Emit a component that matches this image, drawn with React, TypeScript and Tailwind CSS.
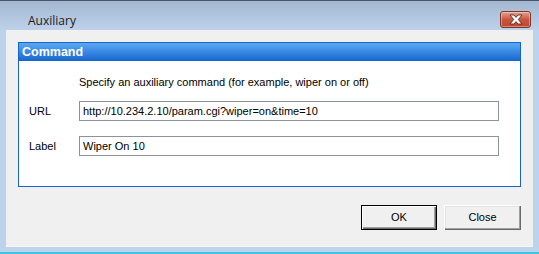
import React from "react";

function CloseGlyph() {
  return (
    <svg width="16" height="11" viewBox="0 0 16 11">
      <path
        d="M2 1 L6 1 L8 3.4 L10 1 L14 1 L10.3 5.5 L14 10 L10 10 L8 7.6 L6 10 L2 10 L5.7 5.5 Z"
        fill="#ffffff"
        stroke="#5a2a22"
        strokeWidth="0.9"
        strokeLinejoin="round"
      />
    </svg>
  );
}

export default function App() {
  const font = { fontFamily: '"Liberation Sans", Arial, sans-serif' };
  return (
    <div
      className="w-[539px] h-[254px] flex flex-col bg-[#bcd3eb] border-t border-[#4a5566] overflow-hidden"
      style={font}
    >
      {/* title bar */}
      <div className="h-[29px] flex justify-between bg-gradient-to-b from-[#a4b7d0] to-[#bdd2ea]">
        <div className="pl-[28px] pt-[11px] text-[12px] text-[#1a1a1a]" style={{ fontFamily: '"Open Sans", "Liberation Sans", sans-serif' }}>
          Auxiliary
        </div>
        <div className="mt-[10px] mr-[8px] w-[31px] h-[17px] rounded-[3px] border border-[#7f3629] bg-gradient-to-b from-[#e3a090] via-[#c9553f] to-[#c04630] flex items-center justify-center shadow-[inset_0_0_0_1px_rgba(255,255,255,0.35)]">
          <CloseGlyph />
        </div>
      </div>
      {/* client area */}
      <div className="mx-[6px] h-[217px] bg-[#f0f0f0] flex flex-col pl-[12px] pt-[12px] border-b border-[#f7f7f7]">
        <div className="w-[503px] h-[145px] border border-[#1664c8] bg-white flex flex-col">
          <div className="h-[18px] bg-gradient-to-b from-[#5aa8f3] to-[#1466cf] flex items-center pl-[3px] text-[12.5px] font-bold text-white">
            Command
          </div>
          <div className="flex flex-col pt-[15px] text-[11px] text-black">
            <div className="pl-[60px] leading-[13px]">
              Specify an auxiliary command (for example, wiper on or off)
            </div>
            <div className="flex items-center mt-[12px] h-[20px]">
              <div className="w-[60px] pl-[10px]">URL</div>
              <div className="w-[420px] h-[20px] border border-[#8e91a3] flex items-center pl-[3px]">
                http://10.234.2.10/param.cgi?wiper=on&amp;time=10
              </div>
            </div>
            <div className="flex items-center mt-[15px] h-[20px]">
              <div className="w-[60px] pl-[10px]">Label</div>
              <div className="w-[420px] h-[20px] border border-[#8e91a3] flex items-center pl-[3px]">
                Wiper On 10
              </div>
            </div>
          </div>
        </div>
        <div className="flex justify-end w-[503px] gap-[7px] mt-[18px] text-[11px] text-black">
          <div className="w-[76px] h-[25px] border border-black bg-[#f0f0f0] flex items-center justify-center shadow-[inset_1px_1px_0_#ffffff,inset_-1px_-1px_0_#696969,inset_-2px_-2px_0_#a0a0a0]">
            OK
          </div>
          <div className="w-[77px] h-[25px] bg-[#f0f0f0] flex items-center justify-center shadow-[inset_1px_1px_0_#ffffff,inset_-1px_-1px_0_#696969,inset_-2px_-2px_0_#a0a0a0,inset_2px_2px_0_#e3e3e3]">
            Close
          </div>
        </div>
      </div>
      <div className="flex-1 bg-[#bcd3eb] border-b-2 border-[#3fc3df]" />
    </div>
  );
}
